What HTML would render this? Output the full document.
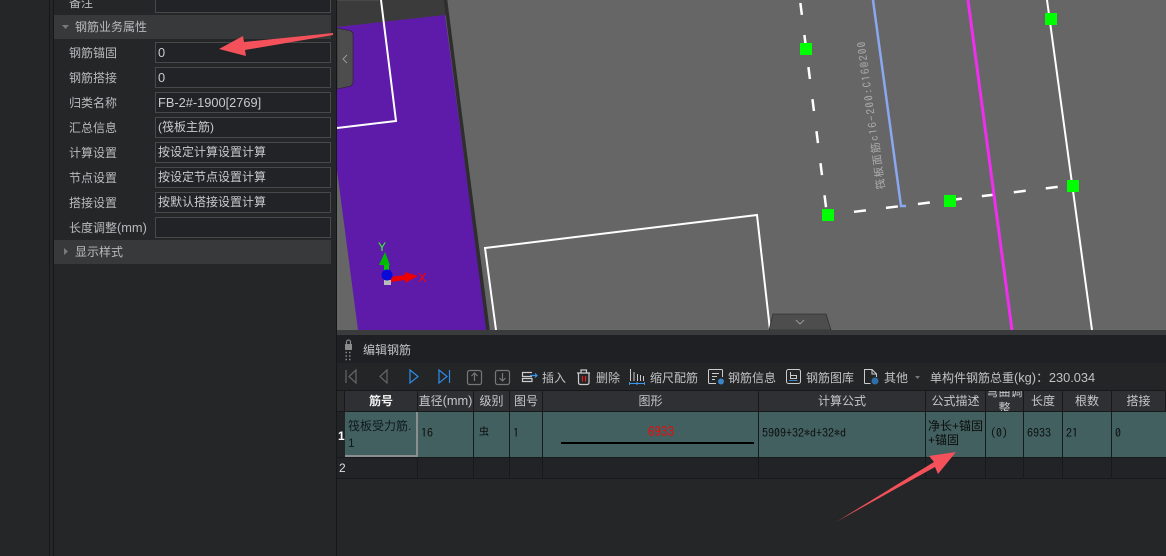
<!DOCTYPE html>
<html><head><meta charset="utf-8"><style>
html,body{margin:0;padding:0;background:#252628}
#r{position:relative;width:1166px;height:556px;overflow:hidden;background:#252628;font-family:"Liberation Sans","Noto Sans CJK SC",sans-serif;font-size:12px;color:#c4c6c8}
#r div{position:absolute;white-space:nowrap;box-sizing:border-box}
.l{left:69px;height:20px;line-height:20px;color:#b8babc}
.i{left:155px;width:176px;height:21px;border:1px solid #47494b;background:#222326;line-height:19px;padding-left:2px;color:#c8cacc}
.h{left:54px;width:277px;height:24px;background:#38393b;line-height:24px;padding-left:21px;color:#b8babc}
.t{top:368px;height:20px;line-height:20px;color:#c0c2c4}
.c{top:391px;height:20px;background:#2f3033;text-align:center;line-height:20px;color:#c4c6c8;border-right:1px solid #18191b}
.d{top:412px;height:45px;background:#426060;border-right:1px solid #18191b;color:#0c0c0c;line-height:15px}
.m{font-family:"IPAGothic","DejaVu Sans Mono",monospace;font-size:12px;padding:14px 0 0 3px}
.e{top:458px;height:20px;background:#222326;border-right:1px solid #18191b}
.n{font-size:12.8px}
</style></head><body><div id="r">
<div style="left:49px;top:0;width:1px;height:556px;background:#161719"></div>
<div style="left:53px;top:0;width:1px;height:556px;background:#161719"></div>
<div style="left:336px;top:0;width:1px;height:556px;background:#161719"></div>
<div class="l" style="top:-7px">备注</div><div class="i" style="top:-8px;height:21px"></div>
<div class="h" style="top:15px">钢筋业务属性</div>
<svg style="position:absolute;left:62px;top:24px" width="8" height="6"><path d="M0 1H7L3.500 5Z" fill="#77797b"/></svg>
<div class="l" style="top:43px">钢筋锚固</div><div class="i n" style="top:42px">0</div>
<div class="l" style="top:68px">钢筋搭接</div><div class="i n" style="top:67px">0</div>
<div class="l" style="top:93px">归类名称</div><div class="i n" style="top:92px">FB-2#-1900[2769]</div>
<div class="l" style="top:118px">汇总信息</div><div class="i" style="top:117px">(筏板主筋)</div>
<div class="l" style="top:143px">计算设置</div><div class="i" style="top:142px">按设定计算设置计算</div>
<div class="l" style="top:168px">节点设置</div><div class="i" style="top:167px">按设定节点设置计算</div>
<div class="l" style="top:193px">搭接设置</div><div class="i" style="top:192px">按默认搭接设置计算</div>
<div class="l" style="top:218px">长度调整<span class="n">(mm)</span></div><div class="i" style="top:217px"></div>
<div class="h" style="top:240px">显示样式</div>
<svg style="position:absolute;left:64px;top:248px" width="6" height="8"><path d="M0 0V7L4 3.500Z" fill="#77797b"/></svg>

<svg style="position:absolute;left:337px;top:0" width="829" height="330" viewBox="337 0 829 330">
<rect x="337" y="0" width="829" height="330" fill="#666"/>
<path d="M337 0H445L447 15L337 27Z" fill="#3b3b3b"/>
<path d="M337 0H379" stroke="#555" stroke-width="1"/>
<path d="M337 27L445 15L487 330H358L337 170Z" fill="#5e1aa8"/>
<path d="M445.500 0L488 330" stroke="#2e2e2e" stroke-width="3.500"/>
<path d="M381 0L396 121L337 128" fill="none" stroke="#fff" stroke-width="2"/>
<path d="M337 28L351 31L353 33V83L351 86L337 89Z" fill="#4d4d4d" stroke="#222" stroke-width=".6"/>
<path d="M347 55L343 59L347 63" fill="none" stroke="#999" stroke-width="1"/>
<path d="M496 330L485 248L757 215L770 330" fill="none" stroke="#fff" stroke-width="2"/>
<path d="M800 0L827 215" stroke="#fff" stroke-width="2.500" stroke-dasharray="12 20.300" stroke-dashoffset="-3"/>
<path d="M828 215L1073 185" stroke="#fff" stroke-width="2.500" stroke-dasharray="12 20.200" stroke-dashoffset="-26.200"/>
<path d="M873 0L901 206L906 206" fill="none" stroke="#8aa8f0" stroke-width="2.500"/>
<path d="M968 0L1012 330" stroke="#f02ef0" stroke-width="3"/>
<path d="M1047 0L1092 330" stroke="#fff" stroke-width="2"/>
<rect x="800" y="43" width="12" height="12" fill="#0f0"/>
<rect x="1045" y="13" width="12" height="12" fill="#0f0"/>
<rect x="822" y="209" width="12" height="12" fill="#0f0"/>
<rect x="944" y="195" width="12" height="12" fill="#0f0"/>
<rect x="1067" y="180" width="12" height="12" fill="#0f0"/>
<text transform="translate(885,189) rotate(-97.700)" font-family="IPAGothic,Noto Sans CJK SC,monospace" font-size="11" fill="#adadad" textLength="149">筏板面筋c16-200:C16@200</text>
<path d="M769 330L773 314H826L831 330Z" fill="#4d4d4d" stroke="#222" stroke-width=".6"/>
<path d="M796 320L800 324L804 320" fill="none" stroke="#999" stroke-width="1"/>
<path d="M386.500 272V264" stroke="#0c0" stroke-width="5"/>
<path d="M379 265L385 252L390 265Z" fill="#0b0"/>
<text x="378" y="251" font-family="Liberation Sans,sans-serif" font-size="12" fill="#3f3">Y</text>
<rect x="384" y="280" width="7" height="5" fill="#bbb"/>
<path d="M391 277L405 275V272L418 276L405 283V280L391 282Z" fill="#e00"/>
<circle cx="387" cy="275" r="5.500" fill="#0a0ad8"/>
<text x="418" y="282" font-family="Liberation Sans,sans-serif" font-size="13" fill="#f00">X</text>
</svg>

<div style="left:337px;top:330px;width:829px;height:5px;background:#3a3b3d"></div>
<div style="left:337px;top:335px;width:829px;height:28px;background:#1f2023"></div>
<div style="left:337px;top:363px;width:829px;height:27px;background:#242527"></div>
<div style="left:363px;top:340px;height:20px;line-height:20px;color:#c0c2c4">编辑钢筋</div>
<svg style="position:absolute;left:343px;top:338px" width="12" height="24"><path d="M2 6H9V12H2Z" fill="#8a8a8a"/><path d="M3.500 6V4A2 2 0 0 1 7.500 4V6" fill="none" stroke="#8a8a8a" stroke-width="1.200"/><path d="M2.500 14.500h1.500M6 14.500h1.500M2.500 18h1.500M6 18h1.500M2.500 21.500h1.500M6 21.500h1.500" stroke="#8a8a8a" stroke-width="1.600"/></svg>
<svg style="position:absolute;left:337px;top:363px" width="310" height="28">
<g fill="none" stroke-width="1.200">
<path d="M9 7V20M19 7L12 13.500L19 20Z" stroke="#666"/>
<path d="M50 7L43 13.500L50 20Z" stroke="#666"/>
<path d="M73 7L81 13.500L73 20Z" stroke="#2e8ae6"/>
<path d="M102 7L110 13.500L102 20ZM112.500 7V20" stroke="#2e8ae6"/>
<rect x="130.500" y="7.500" width="14" height="14" rx="2" stroke="#777"/><path d="M137.500 10V18M134.500 13L137.500 10L140.500 13" stroke="#777"/>
<rect x="158.500" y="7.500" width="14" height="14" rx="2" stroke="#777"/><path d="M165.500 10V18M162.500 15L165.500 18L168.500 15" stroke="#777"/>
<path d="M195 9.500H185.500V13.500H195M185.500 15.500H195V18.500H185.500Z" stroke="#ccc"/><path d="M193 12.500H200M198 10.500L200 12.500L198 14.500" stroke="#3a94e8"/>
<path d="M240 10H253M241.500 10V19.500Q241.500 21.500 243.500 21.500H250Q252 21.500 252 19.500V10M244 10V7H249.500V10" stroke="#ccc"/><path d="M245.500 13V18.500M248.500 13V18.500" stroke="#d22"/>
</g></svg>
<div class="t" style="left:542px">插入</div>
<div class="t" style="left:596px">删除</div>
<svg style="position:absolute;left:628px;top:368px" width="18" height="18"><path d="M2.500 1V13M6 4V13M9.500 6V13M12.500 7V13M15.500 8V13" stroke="#ccc" fill="none"/><path d="M1 15.500H17M1.500 14V17M9 14V17M16.500 14V17" stroke="#3a94e8" fill="none"/></svg>
<div class="t" style="left:650px">缩尺配筋</div>
<svg style="position:absolute;left:707px;top:368px" width="18" height="18"><path d="M15.500 9V2.500Q15.500 1.500 14.500 1.500H2.500Q1.500 1.500 1.500 2.500V14.500Q1.500 15.500 2.500 15.500H9M5 5.500H12M5 8.500H10M5 11.500H8" stroke="#ccc" fill="none"/><circle cx="14" cy="13.500" r="3" fill="#3a84c8"/></svg>
<div class="t" style="left:728px">钢筋信息</div>
<svg style="position:absolute;left:785px;top:368px" width="18" height="18"><rect x="1.500" y="1.500" width="14" height="14" rx="2" stroke="#ccc" fill="none"/><path d="M5.500 4V10.500H11.500V7.500H5.500" stroke="#ccc" fill="none"/><path d="M4 12.500H12.500" stroke="#3a84c8" fill="none"/></svg>
<div class="t" style="left:806px">钢筋图库</div>
<svg style="position:absolute;left:863px;top:368px" width="18" height="18"><path d="M1.500 15.500V1.500H9L13.500 6V9M1.500 15.500H7.500M9 1.500V6H13.500" stroke="#ccc" fill="none"/><circle cx="12" cy="13" r="3.500" fill="#2f6fa8"/></svg>
<div class="t" style="left:884px">其他</div>
<svg style="position:absolute;left:915px;top:376px" width="6" height="5"><path d="M0 0H5L2.500 3Z" fill="#777"/></svg>
<div class="t" style="left:930px">单构件钢筋总重<span class="n">(kg)：230.034</span></div>

<div style="left:337px;top:390px;width:829px;height:89px;background:#18191b"></div>
<div class="c" style="left:337px;width:8px;background:#2a2b2d"></div>
<div class="c" style="left:345px;width:73px;color:#f0f0f0;font-weight:bold">筋号</div>
<div class="c" style="left:418px;width:56px">直径<span class="n">(mm)</span></div>
<div class="c" style="left:474px;width:36px">级别</div>
<div class="c" style="left:510px;width:33px">图号</div>
<div class="c" style="left:543px;width:216px">图形</div>
<div class="c" style="left:759px;width:167px">计算公式</div>
<div class="c" style="left:926px;width:60px">公式描述</div>
<div class="c" style="left:986px;width:38px;overflow:hidden;line-height:16px"><span style="position:relative;top:-7px;display:block">弯曲调<br>整</span></div>
<div class="c" style="left:1024px;width:39px">长度</div>
<div class="c" style="left:1063px;width:49px">根数</div>
<div class="c" style="left:1112px;width:54px">搭接</div>

<div style="left:337px;top:412px;width:8px;height:45px;background:#222326;color:#fff;font-weight:bold;line-height:48px;padding-left:1px">1</div>
<div class="d" style="left:345px;width:73px;padding:6px 0 0 3px;border:2px solid #8a8f8f;border-top:none;border-left:none;line-height:17px;color:#10181c">筏板受力筋.<br>1</div>
<div class="d m" style="left:418px;width:56px">16</div>
<div class="d" style="left:474px;width:36px;padding:13px 0 0 5px;font-size:10px">虫</div>
<div class="d m" style="left:510px;width:33px">1</div>
<div class="d" style="left:543px;width:216px"></div>
<div style="left:648px;top:425px;color:#f00;font-family:IPAGothic,monospace;font-size:13px;line-height:14px">6933</div>
<div style="left:561px;top:442px;width:193px;height:2px;background:#000"></div>
<div class="d m" style="left:759px;width:167px">5909+32*d+32*d</div>
<div class="d" style="left:926px;width:60px;padding:7px 0 0 2px;line-height:14px">净长+锚固<br>+锚固</div>
<div class="d m" style="left:986px;width:38px;padding-left:4px">(0)</div>
<div class="d m" style="left:1024px;width:39px">6933</div>
<div class="d m" style="left:1063px;width:49px">21</div>
<div class="d m" style="left:1112px;width:54px;border-right:none">0</div>

<div style="left:337px;top:458px;width:8px;height:20px;background:#222326;color:#ddd;line-height:20px;padding-left:2px">2</div>
<div class="e" style="left:345px;width:73px"></div><div class="e" style="left:418px;width:56px"></div><div class="e" style="left:474px;width:36px"></div><div class="e" style="left:510px;width:33px"></div><div class="e" style="left:543px;width:216px"></div><div class="e" style="left:759px;width:167px"></div><div class="e" style="left:926px;width:60px"></div><div class="e" style="left:986px;width:38px"></div><div class="e" style="left:1024px;width:39px"></div><div class="e" style="left:1063px;width:49px"></div><div class="e" style="left:1112px;width:54px;border:none"></div>

<svg style="position:absolute;left:0;top:0;pointer-events:none" width="1166" height="556">
<path d="M333 33L244 42L243 36L219 49L246 56L245 50L333 35Z" fill="#f4515a"/>
<path d="M836 522L934 462L929 456L956 452L938 474L935 467Z" fill="#f4515a"/>
</svg>
</div></body></html>
